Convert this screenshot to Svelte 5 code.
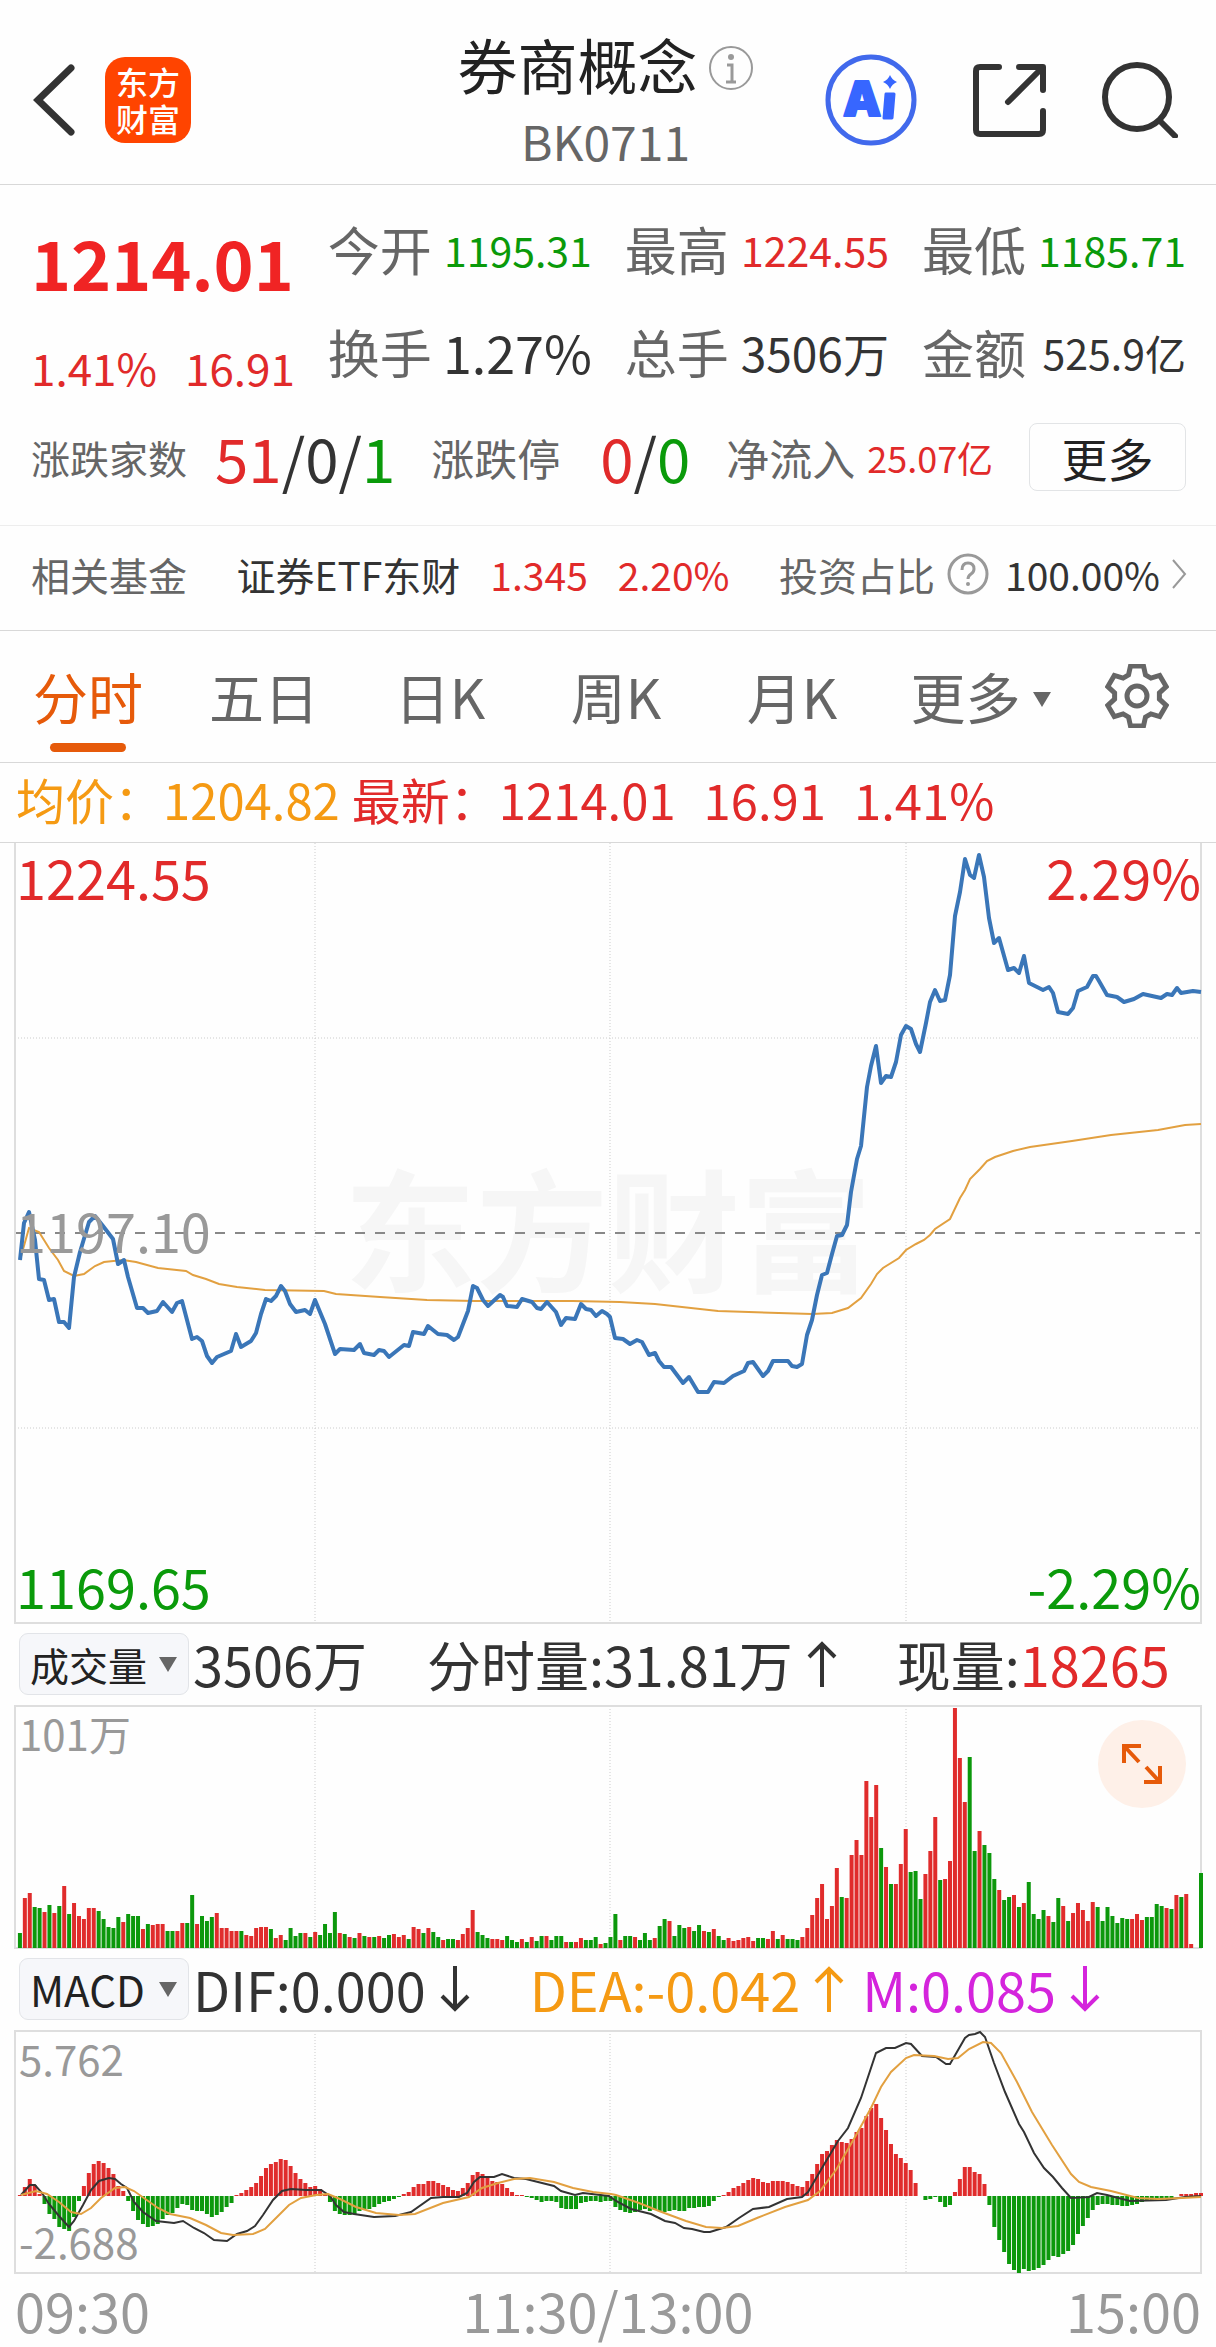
<script lang="ts">
  type Tone = "up" | "down" | "plain";

  const stats: { label: string; value: string; tone: Tone; size: string }[] = [
    { label: "今开", value: "1195.31", tone: "down", size: "sm" },
    { label: "最高", value: "1224.55", tone: "up", size: "sm" },
    { label: "最低", value: "1185.71", tone: "down", size: "sm" },
    { label: "换手", value: "1.27%", tone: "plain", size: "lg" },
    { label: "总手", value: "3506万", tone: "plain", size: "md" },
    { label: "金额", value: "525.9亿", tone: "plain", size: "sm" },
  ];

  const periods = ["分时", "五日", "日K", "周K", "月K"];
  let active = $state("分时");

  // one slot per trading minute
  const SLOT = 1186 / 241;
  const BAR = 4;

  // positive = up minute, negative = down minute
  const volume = [
    -15, 50, 55, -41, -40, 36, -43, 35, -42, 62, -34, 45, 32, 29, 40, 40, -37, -29, -21, -20,
    -31, 26, -34, -32, -32, 19, -24, 23, 24, 24, -17, -17, 17, 25, -25, -53, 24, -32, -27, -31,
    35, 20, 20, 17, 17, -17, 13, 12, 20, 21, 21, -19, 10, 13, -8, -20, -12, -15, 15, -11,
    16, -13, -24, -15, -36, 15, -14, 11, -10, 15, -12, 11, -11, 12, -10, -13, 14, 11, 13, -9,
    21, 19, -15, 20, -16, -11, 8, -9, -9, 8, 14, 20, 38, -16, -13, -10, 9, 9, 8, -12,
    -8, -6, 9, -6, 11, -7, -12, 12, -8, -12, -12, 6, -6, 6, 10, -8, -8, -11, 4, -5,
    -11, -34, 8, -12, -12, 11, -8, -15, -8, 10, -22, -29, 27, -12, -23, -20, 21, -17, -23, 17,
    -16, 19, -12, -8, 10, 7, 8, 10, 11, 7, -10, -10, 9, 17, -9, 13, -9, -9, -8, 11,
    20, 33, 50, 64, 29, 42, 80, -51, 50, 93, 108, 93, 167, 131, 163, -100, 81, -64, 64, 84,
    119, -76, -77, -49, 74, 97, 131, -68, 69, 87, 240, 190, 146, -191, -97, 117, -103, -95, -69, 58,
    -48, -51, 53, -41, 45, -66, -34, -29, -38, 32, -26, -50, 42, -27, 35, 45, 38, 27, 46, -41,
    -27, -41, -32, -25, -30, -29, 29, 34, 28, -31, -31, -44, -42, 40, -39, 53, -51, 54, 4, 0, -75,
  ];

  const macd = [
    1, 9, 17, 11, 2, -8, -18, -23, -31, -33, -35, -21, -5, 10, 23, 32, 35, 33, 28, 22,
    10, 5, -5, -15, -24, -28, -31, -30, -28, -23, -19, -17, -12, -8, -9, -14, -15, -15, -18, -21,
    -19, -16, -11, -7, 1, 3, 6, 9, 13, 20, 28, 32, 34, 37, 36, 30, 23, 17, 13, 9,
    10, 7, 1, -6, -15, -18, -19, -19, -18, -15, -13, -13, -11, -8, -6, -5, -3, -1, 2, 4,
    9, 12, 12, 15, 15, 13, 11, 9, 6, 5, 8, 13, 21, 24, 22, 19, 15, 14, 12, 8,
    4, 1, 1, -1, -2, -4, -6, -5, -5, -6, -12, -13, -13, -13, -7, -6, -5, -5, -6, -5,
    -5, -11, -14, -16, -17, -16, -14, -13, -15, -14, -15, -16, -15, -14, -15, -15, -12, -12, -11, -11,
    -10, -5, -1, 1, 4, 8, 10, 13, 16, 18, 17, 14, 13, 15, 15, 15, 14, 12, 10, 9,
    15, 22, 32, 42, 45, 51, 56, 54, 53, 57, 64, 68, 80, 88, 92, 78, 66, 52, 42, 38,
    33, 26, 13, 0, -4, -3, -1, -6, -11, -9, 4, 17, 29, 29, 24, 22, 12, -9, -31, -44,
    -56, -68, -74, -77, -73, -75, -74, -72, -69, -64, -60, -61, -58, -55, -49, -38, -30, -22, -14, -9,
    -8, -8, -9, -9, -10, -10, -9, -8, -6, -5, -5, -4, -4, -3, -2, 0, 2, 2, 2, 3, 3,
  ];

  const priceLine =
    "20,1260 24,1223 29,1212 35,1240 39,1279 44,1280 49,1300 54,1299 59,1322 64,1322 69,1328 74,1277 80,1252 89,1222 95,1216 103,1226 113,1239 118,1264 124,1260 128,1277 137,1308 143,1308 148,1313 157,1311 163,1302 172,1312 177,1303 182,1301 187,1320 192,1339 197,1337 202,1341 207,1356 212,1363 217,1357 231,1351 236,1334 241,1347 251,1341 256,1333 261,1314 266,1299 271,1301 276,1296 281,1286 285,1291 290,1304 296,1312 305,1310 310,1314 315,1300 325,1324 335,1354 340,1349 354,1350 360,1344 364,1353 374,1355 379,1350 384,1351 389,1357 404,1345 409,1346 413,1332 424,1334 428,1326 438,1334 447,1335 454,1340 458,1337 468,1311 473,1286 477,1288 483,1300 488,1306 500,1295 503,1297 507,1306 517,1307 522,1299 532,1302 537,1308 541,1309 547,1302 556,1312 561,1325 566,1318 575,1319 581,1304 586,1309 591,1310 596,1316 602,1311 607,1314 610,1317 615,1338 623,1339 630,1344 637,1340 642,1342 649,1355 655,1353 659,1361 664,1367 671,1367 683,1383 689,1377 698,1392 708,1392 714,1382 724,1383 733,1376 744,1371 748,1363 753,1362 763,1376 768,1371 773,1361 788,1361 792,1366 797,1367 802,1364 807,1335 812,1320 817,1295 822,1275 827,1273 832,1254 837,1236 842,1235 847,1225 851,1192 857,1159 861,1146 867,1087 871,1066 876,1046 881,1083 886,1076 891,1077 896,1062 901,1035 906,1026 911,1029 916,1044 920,1052 926,1023 930,1002 935,990 940,1001 945,1000 950,975 955,916 960,892 965,859 970,875 974,878 979,855 984,877 989,918 994,943 999,938 1008,970 1014,968 1019,973 1024,956 1029,983 1043,990 1049,987 1053,993 1058,1012 1068,1014 1073,1008 1078,991 1087,987 1093,976 1096,976 1099,981 1107,995 1117,997 1124,1002 1134,999 1143,994 1161,998 1167,994 1172,995 1177,988 1181,993 1193,991 1201,992";

  const averageLine =
    "20,1260 29,1228 39,1232 49,1248 58,1260 64,1271 74,1276 84,1274 95,1266 104,1262 123,1260 136,1262 158,1268 186,1271 193,1275 206,1279 219,1284 237,1287 265,1290 324,1291 336,1294 380,1297 427,1300 475,1301 573,1301 620,1302 655,1304 718,1311 812,1314 832,1313 848,1308 861,1298 871,1284 877,1274 883,1268 899,1258 906,1250 916,1244 924,1240 930,1235 935,1229 950,1219 960,1198 965,1190 970,1179 980,1169 987,1161 995,1157 1013,1151 1030,1147 1072,1141 1111,1135 1158,1130 1185,1125 1201,1124";

  const difLine =
    "21,2195 30,2185 35,2185 42,2193 49,2204 59,2216 69,2227 74,2221 83,2205 91,2190 99,2181 109,2178 115,2179 121,2184 127,2188 134,2202 143,2212 156,2221 174,2223 183,2221 194,2228 204,2233 214,2240 227,2241 237,2234 247,2231 255,2226 263,2215 273,2200 282,2191 291,2189 306,2190 321,2190 330,2196 336,2205 344,2212 354,2214 374,2217 395,2216 411,2212 431,2198 443,2197 459,2197 467,2193 474,2182 480,2177 494,2177 502,2174 514,2178 526,2179 542,2183 554,2186 561,2191 575,2195 583,2193 609,2196 616,2201 631,2209 651,2214 665,2221 675,2223 684,2228 692,2229 704,2232 710,2232 726,2227 739,2218 753,2209 769,2207 787,2199 802,2197 808,2192 822,2168 838,2141 848,2128 861,2098 876,2053 886,2048 895,2048 906,2043 911,2044 922,2056 936,2057 946,2064 950,2064 965,2038 969,2035 975,2034 980,2032 985,2037 994,2063 1005,2092 1019,2124 1024,2132 1034,2153 1044,2168 1053,2177 1062,2188 1071,2198 1089,2197 1097,2193 1107,2195 1130,2201 1166,2200 1185,2197 1201,2196";

  const deaLine =
    "21,2195 36,2191 47,2194 59,2202 71,2212 81,2214 91,2208 101,2198 115,2188 125,2187 134,2191 158,2208 170,2214 190,2218 206,2225 221,2233 233,2235 253,2234 265,2229 277,2217 289,2205 301,2198 316,2195 328,2194 340,2199 356,2207 376,2213 399,2215 415,2214 443,2203 469,2197 482,2188 498,2183 514,2179 530,2178 554,2182 573,2188 593,2192 611,2194 616,2195 639,2203 659,2211 686,2221 706,2227 722,2228 738,2226 757,2218 785,2207 808,2200 820,2191 836,2170 855,2137 871,2108 881,2087 891,2072 906,2058 914,2055 934,2056 948,2059 958,2058 969,2049 983,2042 991,2043 1001,2053 1017,2082 1032,2112 1052,2145 1071,2174 1079,2182 1091,2187 1111,2191 1138,2198 1158,2199 1182,2198 1201,2197";
</script>

{#snippet arrow(dir: string)}
  <svg class="arrow" viewBox="0 0 30 46" aria-hidden="true">
    {#if dir === "up"}
      <path d="M15 46V3M2 16 15 3l13 13" />
    {:else}
      <path d="M15 0v43M2 30l13 13 13-13" />
    {/if}
  </svg>
{/snippet}

{#snippet verticals(top: number, bottom: number)}
  {#each [315, 610, 906] as x}
    <line class="dotted" x1={x} x2={x} y1={top} y2={bottom} />
  {/each}
{/snippet}

<header class="topbar">
  <div class="side">
    <button class="icon-btn" aria-label="返回">
      <svg width="42" height="72" viewBox="0 0 42 72"><path class="ink thick" d="M38 4 5 36l33 32" /></svg>
    </button>
    <a class="logo" href="#home">东方<br />财富</a>
  </div>

  <div class="heading">
    <h1>
      券商概念
      <svg width="46" height="46" viewBox="0 0 46 46" aria-hidden="true">
        <circle cx="23" cy="23" r="21" fill="none" stroke="#999" stroke-width="2" />
        <circle cx="23" cy="12" r="3" fill="#999" />
        <path d="M19 20h5v17M18 37h10" fill="none" stroke="#999" stroke-width="3" />
      </svg>
    </h1>
    <p>BK0711</p>
  </div>

  <div class="side actions">
    <button class="icon-btn" aria-label="智能助手">
      <svg width="92" height="92" viewBox="0 0 92 92">
        <circle cx="46" cy="46" r="43" fill="none" stroke="#4169ec" stroke-width="5" />
        <text class="ai" x="18" y="62">A</text>
        <path d="M61 40h8l-2 24h-8z" fill="#3766ff" stroke="#3766ff" stroke-width="3" stroke-linejoin="round" />
        <path d="M65 21q2 5 7 7-5 2-7 7-2-5-7-7 5-2 7-7z" fill="#3766ff" />
      </svg>
    </button>
    <button class="icon-btn" aria-label="分享">
      <svg width="73" height="73" viewBox="0 0 73 73">
        <path class="ink" d="M26 3H7q-4 0-4 4v59q0 4 4 4h59q4 0 4-4V47M46 3h24v23M69 4 35 38" />
      </svg>
    </button>
    <button class="icon-btn" aria-label="搜索">
      <svg width="76" height="76" viewBox="0 0 76 76">
        <circle class="ink" cx="35" cy="35" r="32" />
        <path class="ink" d="m58 59 15 15" />
      </svg>
    </button>
  </div>
</header>

<section class="quote">
  <div class="summary">
    <div class="last up">
      <strong>1214.01</strong>
      <p><span>1.41%</span><span>16.91</span></p>
    </div>
    <dl class="stats">
      {#each stats as s}
        <div class="stat">
          <dt>{s.label}</dt>
          <dd class="{s.tone} {s.size}">{s.value}</dd>
        </div>
      {/each}
    </dl>
  </div>

  <div class="breadth">
    <div class="pair">
      <span class="cap small">涨跌家数</span>
      <span class="count"><b class="up">51</b>/0/<b class="down">1</b></span>
    </div>
    <div class="pair wide">
      <span class="cap">涨跌停</span>
      <span class="count"><b class="up">0</b>/<b class="down">0</b></span>
    </div>
    <div class="pair tight">
      <span class="cap">净流入</span>
      <span class="flow up">25.07亿</span>
    </div>
    <button class="more">更多</button>
  </div>
</section>

<section class="fund">
  <span class="muted">相关基金</span>
  <a class="fund-name" href="#fund">
    <span>证券ETF东财</span>
    <span class="up">1.345</span>
    <span class="up">2.20%</span>
  </a>
  <a class="ratio" href="#ratio">
    <span class="muted">投资占比</span>
    <svg width="42" height="42" viewBox="0 0 42 42" aria-hidden="true">
      <circle cx="21" cy="21" r="19" fill="none" stroke="#999" stroke-width="3" />
      <path d="M15 17q0-7 6-7t6 6q0 3-3 5t-3 5" fill="none" stroke="#999" stroke-width="3" />
      <circle cx="21" cy="31" r="2" fill="#999" />
    </svg>
    <span class="pct">100.00%</span>
    <svg width="15" height="30" viewBox="0 0 15 30" aria-hidden="true">
      <path d="m1 1 12 14L1 29" fill="none" stroke="#999" stroke-width="2" />
    </svg>
  </a>
</section>

<nav class="tabs">
  {#each periods as p}
    <button class="tab" class:active={active === p} onclick={() => (active = p)}>{p}</button>
  {/each}
  <button class="tab menu">更多<i class="caret"></i></button>
  <button class="icon-btn" aria-label="设置">
    <svg width="64" height="64" viewBox="-32 -32 64 64">
      <path
        class="gear"
        d="M-8.500-21-6.500-30H6.500L8.500-21 13.900-17.900 22.700-20.600 29.200-9.400 22.400-3.100V3.100L29.200 9.400 22.700 20.600 13.900 17.900 8.500 21 6.500 30H-6.500L-8.500 21-13.900 17.900-22.700 20.600-29.200 9.400-22.400 3.100V-3.100L-29.200-9.400-22.700-20.600-13.900-17.900z"
      />
      <circle class="gear" r="10" />
    </svg>
  </button>
</nav>

<p class="legend">
  <span class="avg">均价：1204.82</span>
  <span class="up">最新：1214.01</span>
  <span class="up wide">16.91</span>
  <span class="up wide">1.41%</span>
</p>

<main>
  <div class="panel price">
    <span class="watermark" aria-hidden="true">东方财富</span>
    <svg class="plot" viewBox="15 843 1186 780" preserveAspectRatio="none">
      {@render verticals(843, 1623)}
      <line class="dotted" x1="15" x2="1201" y1="1038" y2="1038" />
      <line class="dotted" x1="15" x2="1201" y1="1428" y2="1428" />
      <line class="dashed" x1="15" x2="1201" y1="1233" y2="1233" />
      <path class="frame" d="M15 843v780h1186V843" />
      <polyline class="line-avg" points={averageLine} />
      <polyline class="line-price" points={priceLine} />
    </svg>
    <span class="tick top left up">1224.55</span>
    <span class="tick top right up">2.29%</span>
    <span class="tick middle left">1197.10</span>
    <span class="tick bottom left down">1169.65</span>
    <span class="tick bottom right down">-2.29%</span>
  </div>

  <div class="readout">
    <span class="picker">
      <select aria-label="指标一"><option>成交量</option></select>
      <i class="caret"></i>
    </span>
    <div class="values">
      <span>3506万</span>
      <span class="with-arrow">分时量:31.81万{@render arrow("up")}</span>
      <span>现量:<b class="up">18265</b></span>
    </div>
  </div>

  <div class="panel sub">
    <svg class="plot" viewBox="15 1706 1186 242" preserveAspectRatio="none">
      {@render verticals(1706, 1948)}
      <path class="frame" d="M15 1706h1186v242H15z" />
      {#each volume as v, i}
        <rect
          class={v > 0 ? "bar-up" : "bar-down"}
          x={15 + (i + 1) * SLOT - BAR / 2}
          y={1948 - Math.abs(v)}
          width={BAR}
          height={Math.abs(v)}
        />
      {/each}
    </svg>
    <span class="scale top">101万</span>
    <button class="expand" aria-label="全屏">
      <svg width="44" height="44" viewBox="0 0 44 44">
        <path d="M4 21V4h17M5 5l14 15M40 24v16H24M39 39 26 25" />
      </svg>
    </button>
  </div>

  <div class="readout">
    <span class="picker latin">
      <select aria-label="指标二"><option>MACD</option></select>
      <i class="caret"></i>
    </span>
    <div class="values">
      <span class="with-arrow">DIF:0.000{@render arrow("down")}</span>
      <div class="pair-values">
        <span class="with-arrow avg">DEA:-0.042{@render arrow("up")}</span>
        <span class="with-arrow hist">M:0.085{@render arrow("down")}</span>
      </div>
    </div>
  </div>

  <div class="panel sub">
    <svg class="plot" viewBox="15 2031 1186 242" preserveAspectRatio="none">
      {@render verticals(2031, 2273)}
      <path class="frame" d="M15 2031h1186v242H15z" />
      {#each macd as m, i}
        <rect
          class={m > 0 ? "bar-up" : "bar-down"}
          x={15 + (i + 1) * SLOT - BAR / 2}
          y={m > 0 ? 2196 - m : 2196}
          width={BAR}
          height={Math.abs(m)}
        />
      {/each}
      <polyline class="line-dif" points={difLine} />
      <polyline class="line-avg" points={deaLine} />
    </svg>
    <span class="scale top">5.762</span>
    <span class="scale low">-2.688</span>
  </div>

  <div class="times">
    <span>09:30</span>
    <span>11:30/13:00</span>
    <span>15:00</span>
  </div>
</main>

<style>
  :global(body) {
    margin: 0;
    background: #fefefe;
    color: #333;
    font-family: "Noto Sans CJK SC", sans-serif;
    white-space: nowrap;
  }

  h1,
  p,
  dl,
  dd {
    margin: 0;
  }

  b {
    font-weight: inherit;
  }

  a {
    color: inherit;
    text-decoration: none;
  }

  button,
  select {
    border: 0;
    padding: 0;
    background: none;
    color: inherit;
    font: inherit;
    cursor: pointer;
  }

  svg {
    display: block;
    flex-shrink: 0;
  }

  .up {
    color: #e12a2a;
  }

  .down {
    color: #0a9a0a;
  }

  .avg {
    color: #f59a13;
  }

  .hist {
    color: #d424dc;
  }

  .muted {
    color: #666;
  }

  /* top bar */
  .topbar {
    display: grid;
    grid-template-columns: 1fr auto 1fr;
    align-items: center;
    padding: 28px 38px 12px 33px;
    border-bottom: 1px solid #d8d8d8;
  }

  .side {
    display: flex;
    align-items: center;
    gap: 30px;
  }

  .actions {
    justify-content: flex-end;
    gap: 56px;
  }

  .ink {
    fill: none;
    stroke: #333;
    stroke-width: 6;
    stroke-linecap: round;
    stroke-linejoin: round;
  }

  .thick {
    stroke-width: 7;
    stroke-linejoin: miter;
  }

  .ai {
    fill: #3766ff;
    stroke: #3766ff;
    stroke-width: 2;
    stroke-linejoin: round;
    font: 900 48px Inter, sans-serif;
  }

  .logo {
    box-sizing: border-box;
    width: 86px;
    height: 86px;
    padding-top: 6px;
    border-radius: 20px;
    background: #ff4400;
    color: #fff;
    font-size: 32px;
    font-weight: 500;
    line-height: 37px;
    text-align: center;
  }

  .heading {
    text-align: center;
  }

  h1 {
    display: flex;
    align-items: center;
    gap: 10px;
    font-size: 60px;
    font-weight: 400;
    line-height: 72px;
    color: #222;
  }

  h1 svg {
    margin-top: 8px;
  }

  .heading p {
    margin-top: 8px;
    font-size: 48px;
    line-height: 64px;
    color: #666;
  }

  /* quote */
  .quote {
    padding: 28px 30px 34px 31px;
    border-bottom: 1px solid #ededed;
  }

  .summary {
    display: grid;
    grid-template-columns: 1fr 3fr;
  }

  .last {
    padding-top: 13px;
  }

  .last strong {
    display: block;
    font-size: 68px;
    font-weight: 700;
    line-height: 72px;
    color: #f02424;
  }

  .last p {
    display: flex;
    gap: 28px;
    margin-top: 33px;
    font-size: 44px;
    line-height: 72px;
  }

  .stats {
    display: grid;
    grid-template-columns: repeat(3, 1fr);
    gap: 31px 33px;
    align-content: start;
    margin-left: 8px;
  }

  .stat {
    display: flex;
    justify-content: space-between;
    align-items: center;
    line-height: 72px;
  }

  .stat dt {
    font-size: 52px;
    color: #666;
  }

  .sm {
    font-size: 41px;
  }

  .md {
    font-size: 46px;
  }

  .lg {
    font-size: 52px;
  }

  .breadth {
    display: flex;
    align-items: center;
    justify-content: space-between;
    margin-top: 20px;
  }

  .pair {
    display: flex;
    align-items: center;
    gap: 28px;
    line-height: 60px;
  }

  .pair.wide {
    gap: 40px;
  }

  .pair.tight {
    gap: 12px;
  }

  .cap {
    font-size: 43px;
    color: #666;
  }

  .cap.small {
    font-size: 39px;
  }

  .count {
    font-size: 60px;
  }

  .flow {
    font-size: 36px;
  }

  .more {
    width: 157px;
    height: 68px;
    border: 1px solid #e2e4e6;
    border-radius: 8px;
    font-size: 46px;
    line-height: 60px;
    color: #222;
  }

  /* related fund */
  .fund {
    display: flex;
    justify-content: space-between;
    padding: 20px 29px 28px 31px;
    border-bottom: 1px solid #d8d8d8;
    font-size: 39px;
    line-height: 56px;
  }

  .fund-name {
    display: flex;
    gap: 30px;
  }

  .ratio {
    display: flex;
    align-items: center;
    gap: 12px;
  }

  .pct {
    margin-left: 4px;
  }

  /* period tabs */
  .tabs {
    display: grid;
    grid-template-columns: repeat(5, 176fr) 201fr 112fr;
    align-items: start;
    padding: 27px 23px 10px 0;
    border-bottom: 1px solid #d8d8d8;
    color: #666;
  }

  .tabs .icon-btn {
    justify-self: center;
    padding-top: 6px;
  }

  .tab {
    font-size: 55px;
    line-height: 74px;
  }

  .tab::after {
    content: "";
    display: block;
    width: 76px;
    height: 9px;
    margin: 11px auto 0;
    border-radius: 5px;
  }

  .tab.active {
    color: #e65a0a;
  }

  .tab.active::after {
    background: #e65a0a;
  }

  .gear {
    fill: none;
    stroke: #666;
    stroke-width: 5;
  }

  .caret {
    display: inline-block;
    border: solid transparent;
    border-width: 15px 9px 0;
    border-top-color: #666;
  }

  .menu .caret {
    margin: 0 0 12px 12px;
  }

  /* legend line */
  .legend {
    display: flex;
    gap: 12px;
    padding: 0 16px 7px;
    border-bottom: 1px solid #d8d8d8;
    font-size: 49px;
    line-height: 72px;
  }

  .legend .wide {
    margin-left: 16px;
  }

  /* charts */
  main {
    padding: 0 15px;
  }

  .panel {
    position: relative;
  }

  .price {
    display: grid;
    height: 780px;
  }

  .sub {
    height: 242px;
  }

  .plot {
    grid-area: 1 / 1;
    position: relative;
    width: 100%;
    height: 100%;
    overflow: visible;
  }

  .plot line,
  .plot path,
  .plot polyline {
    fill: none;
    vector-effect: non-scaling-stroke;
  }

  .watermark {
    grid-area: 1 / 1;
    place-self: center;
    font-size: 132px;
    font-weight: 700;
    line-height: 176px;
    padding-bottom: 16px;
    color: #f6f6f6;
  }

  .frame {
    stroke: #dedede;
    stroke-width: 2;
  }

  .dotted {
    stroke: #ccc;
    stroke-width: 1;
    stroke-dasharray: 1 2;
  }

  .dashed {
    stroke: #888;
    stroke-width: 2;
    stroke-dasharray: 10 10;
  }

  .line-price {
    stroke: #3a76b8;
    stroke-width: 4;
    stroke-linejoin: round;
  }

  .line-avg {
    stroke: #e2a040;
    stroke-width: 2;
  }

  .line-dif {
    stroke: #333;
    stroke-width: 2;
  }

  .bar-up {
    fill: #e02c2c;
  }

  .bar-down {
    fill: #0c980c;
  }

  .tick {
    position: absolute;
    font-size: 54px;
    line-height: 64px;
  }

  .left {
    left: 1px;
  }

  .right {
    right: 0;
  }

  .tick.top {
    top: 2px;
  }

  .tick.middle {
    top: 355px;
    color: #999;
  }

  .tick.bottom {
    bottom: 5px;
  }

  .scale {
    position: absolute;
    left: 4px;
    font-size: 42px;
    line-height: 48px;
    color: #999;
  }

  .scale.top {
    top: 3px;
  }

  .scale.low {
    bottom: 8px;
  }

  .expand {
    position: absolute;
    top: 14px;
    right: 15px;
    display: grid;
    place-items: center;
    width: 88px;
    height: 88px;
    border-radius: 50%;
    background: #fef0e8;
  }

  .expand path {
    fill: none;
    stroke: #e65a0a;
    stroke-width: 4;
  }

  .readout {
    display: flex;
    align-items: center;
    gap: 4px;
    padding: 10px 4px 11px;
    font-size: 54px;
    line-height: 62px;
  }

  .picker {
    display: grid;
    align-items: center;
    width: 170px;
    box-sizing: border-box;
    border: 1px solid #e2e4e8;
    border-radius: 9px;
    background: #f6f7fa;
    color: #222;
    font-size: 39px;
  }

  .picker select {
    grid-area: 1 / 1;
    appearance: none;
    width: 100%;
    height: 60px;
    padding-left: 10px;
    line-height: 60px;
  }

  .picker.latin {
    font-size: 42px;
  }

  .picker .caret {
    grid-area: 1 / 1;
    justify-self: end;
    margin-right: 11px;
    pointer-events: none;
  }

  .values {
    display: flex;
    gap: 60px;
  }

  .pair-values {
    display: flex;
    gap: 18px;
  }

  .with-arrow {
    display: flex;
    align-items: center;
    gap: 14px;
  }

  .arrow {
    width: 30px;
    height: 46px;
    fill: none;
    stroke: currentColor;
    stroke-width: 4;
  }

  .times {
    display: flex;
    justify-content: space-between;
    font-size: 54px;
    line-height: 74px;
    color: #999;
  }
</style>
